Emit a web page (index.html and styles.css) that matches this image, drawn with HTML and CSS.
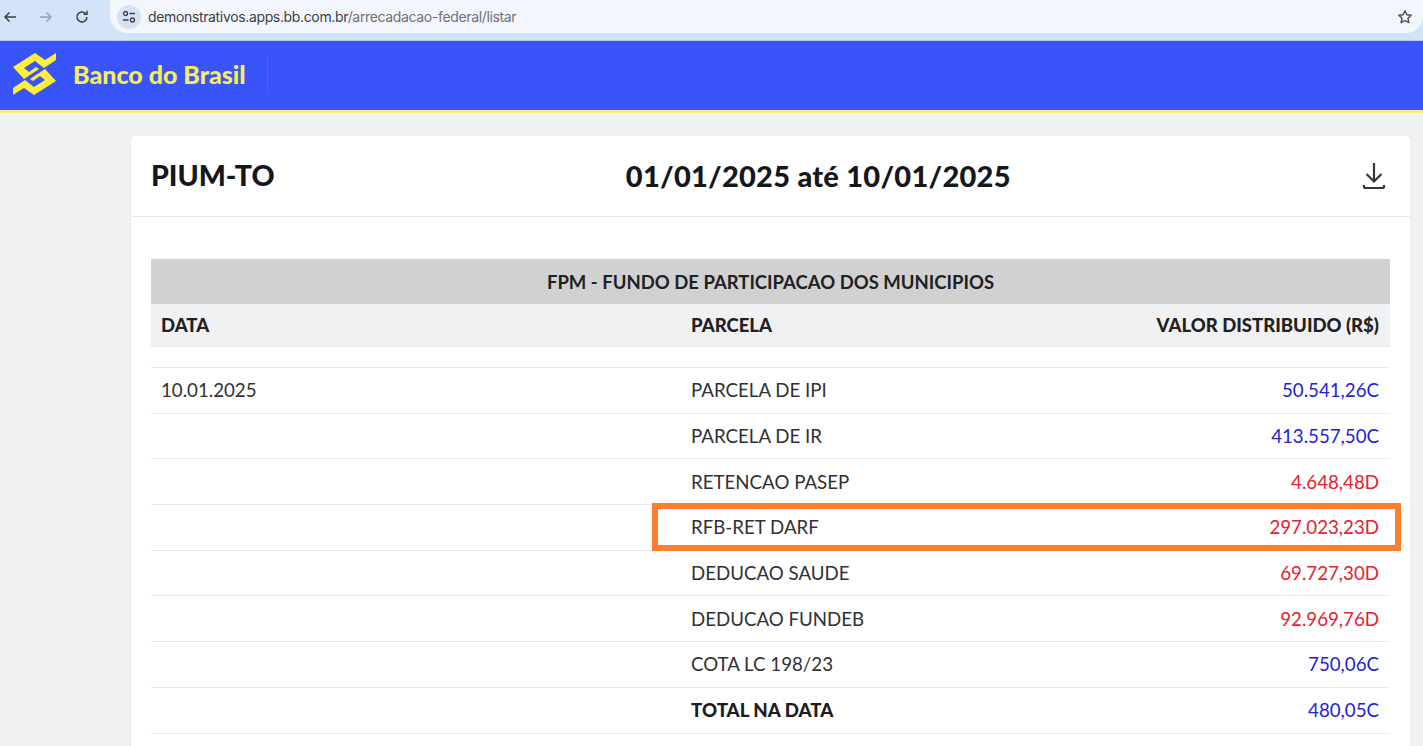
FILE: index.html
```html
<!DOCTYPE html>
<html lang="pt-BR">
<head>
<meta charset="utf-8">
<title>Demonstrativos</title>
<link rel="stylesheet" href="styles.css">
</head>
<body>
<div class="chrome">
  <div class="nav">
    <svg class="nav-icon" viewBox="0 0 16 16"><path d="M14 8H3M7.500 3.500 3 8l4.500 4.500" fill="none" stroke="#3c4043" stroke-width="1.500"/></svg>
    <svg class="nav-icon" viewBox="0 0 16 16"><path d="M2 8h11M8.500 3.500 13 8l-4.500 4.500" fill="none" stroke="#9aa3ae" stroke-width="1.500"/></svg>
    <svg class="nav-icon" viewBox="0 0 16 16"><path d="M13 8a5 5 0 1 1-1.500-3.600M13 1.800v3.400H9.600" fill="none" stroke="#3c4043" stroke-width="1.500"/></svg>
  </div>
  <div class="omnibox">
    <span class="site-btn">
      <svg viewBox="0 0 16 16" width="16" height="16"><circle cx="4.500" cy="4.500" r="2" fill="none" stroke="#3c4043" stroke-width="1.300"/><path d="M8.500 4.500H14M2 11h5.500" stroke="#3c4043" stroke-width="1.300"/><circle cx="11.500" cy="11" r="2" fill="none" stroke="#3c4043" stroke-width="1.300"/></svg>
    </span>
    <span class="url"><span class="url-host">demonstrativos.apps.bb.com.br</span>/arrecadacao-federal/listar</span>
    <svg class="star" viewBox="0 0 16 16" width="16" height="16"><path d="M8 1.800l1.900 4 4.300.5-3.200 3 .9 4.300L8 11.500l-3.900 2.100.9-4.300-3.200-3 4.300-.5z" fill="none" stroke="#474b50" stroke-width="1.400" stroke-linejoin="round"/></svg>
  </div>
</div>
<header class="brand">
  <svg class="logo" viewBox="0 0 44 44" width="44" height="44">
    <polygon fill="#fcee3a" points="0,15 22,1 32,8 43,1 43,8 31,16 22,9 11,16 16,20 23,15 26,17 11,27"/>
    <polygon fill="#fcee3a" points="43,29 21,43 11,36 0,43 0,36 12,28 21,35 32,28 27,24 20,29 17,27 32,17"/>
  </svg>
  <span class="brand-name">Banco do Brasil</span>
  <span class="brand-sep"></span>
</header>
<main class="page">
  <section class="card">
    <div class="card-head">
      <h1 class="place">PIUM-TO</h1>
      <h2 class="period">01/01/2025 até 10/01/2025</h2>
      <svg class="download" viewBox="0 0 24 28" width="24" height="28"><path d="M12 1v18M4.500 12 12 19.500 19.500 12M2 23v1.500a1.500 1.500 0 0 0 1.500 1.500h17a1.500 1.500 0 0 0 1.500-1.500V23" fill="none" stroke="#33373c" stroke-width="2.200"/></svg>
    </div>
    <div class="card-body">
      <div class="table-title">FPM - FUNDO DE PARTICIPACAO DOS MUNICIPIOS</div>
      <div class="row head"><span>DATA</span><span>PARCELA</span><span class="val">VALOR DISTRIBUIDO (R$)</span></div>
      <div class="spacer"></div>
      <div class="row"><span>10.01.2025</span><span>PARCELA DE IPI</span><span class="val cr">50.541,26C</span></div>
      <div class="row"><span></span><span>PARCELA DE IR</span><span class="val cr">413.557,50C</span></div>
      <div class="row"><span></span><span>RETENCAO PASEP</span><span class="val db">4.648,48D</span></div>
      <div class="row marked"><span></span><span>RFB-RET DARF</span><span class="val db">297.023,23D</span><i class="highlight"></i></div>
      <div class="row"><span></span><span>DEDUCAO SAUDE</span><span class="val db">69.727,30D</span></div>
      <div class="row"><span></span><span>DEDUCAO FUNDEB</span><span class="val db">92.969,76D</span></div>
      <div class="row"><span></span><span>COTA LC 198/23</span><span class="val cr">750,06C</span></div>
      <div class="row"><span></span><b>TOTAL NA DATA</b><span class="val cr">480,05C</span></div>
    </div>
  </section>
</main>
</body>
</html>
```
FILE: styles.css
```css
* { box-sizing: border-box; }
html, body { margin: 0; height: 746px; overflow: hidden; }
body { background: #f0f1f3; font-family: "Lato", "Open Sans", sans-serif; color: #2a2c30; }
.chrome { height: 41px; background: #d3e3fa; display: flex; align-items: flex-start; padding-left: 2px; border-bottom: 1px solid #b9cbe6; }
.nav { display: flex; align-items: center; gap: 20px; height: 33px; width: 108px; }
.nav-icon { width: 16px; height: 16px; }
.omnibox { flex: 1; height: 33px; background: #f3f6fc; border-radius: 0 0 17px 17px; display: flex; align-items: center; padding: 0 10px 0 7px; }
.site-btn { width: 24px; height: 24px; border-radius: 50%; background: #d6e3f5; display: flex; align-items: center; justify-content: center; margin-right: 7px; }
.url { font: 14px "Inter", sans-serif; letter-spacing: -0.350px; color: #6e7278; flex: 1; }
.url-host { color: #3c4043; }
.brand { height: 72px; background: #3a54fb; border-bottom: 3px solid #f3f07a; display: flex; align-items: center; padding: 0 0 4px 13px; }
.logo { flex: none; }
.brand-name { font-size: 25px; font-weight: 900; color: #f7ee5c; margin-left: 16px; }
.brand-sep { width: 1px; height: 40px; background: #4c63f4; margin-left: 21px; }
.page { padding: 22px 12px 0 130px; }
.card { background: #fff; border: 1px solid #eceded; border-radius: 5px; height: 640px; }
.card-head { height: 81px; border-bottom: 1px solid #e9eaec; display: flex; justify-content: space-between; align-items: center; padding: 0 24px 2px 20px; }
.place, .period { margin: 0; font-weight: 900; color: #15171a; }
.place { font-size: 28.500px; }
.period { font-size: 29px; letter-spacing: 0.250px; }
.download { margin-top: 2px; }
.card-body { padding: 42px 20px 0; }
.table-title { height: 45px; background: #d1d1d1; display: flex; align-items: center; justify-content: center; font-size: 18.500px; font-weight: 700; color: #1f2125; }
.row { position: relative; display: grid; grid-template-columns: 530px 1fr auto; align-items: center; height: 45.700px; padding: 0 11px 0 10px; border-bottom: 1px solid #e9eaec; font-size: 18.700px; color: #2f3135; }
.row b { font-weight: 900; color: #1b1d20; }
.row.head { height: 43px; background: #f0f1f3; font-size: 18.500px; font-weight: 900; color: #1f2125; border-bottom: 1px solid #e4e5e7; }
.spacer { height: 21px; border-bottom: 1px solid #e9eaec; }
.val { text-align: right; }
.cr { color: #1f22d6; }
.db { color: #e8202d; }
.highlight { position: absolute; left: 501px; right: -11px; top: -2px; bottom: -1px; border: 6px solid #fd7e2c; }
```
